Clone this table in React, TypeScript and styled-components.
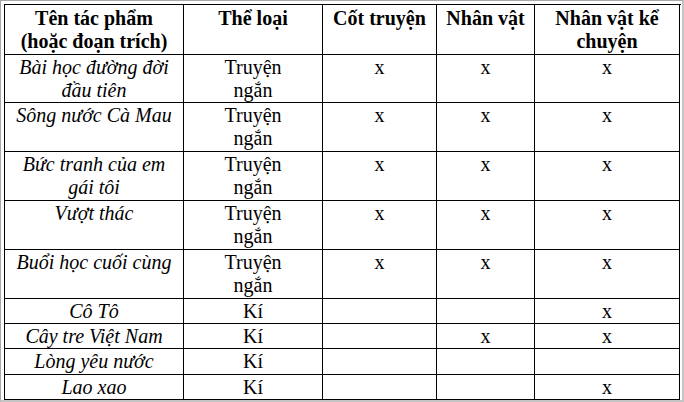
import { Fragment } from "react";
import styled, { createGlobalStyle } from "styled-components";

type Row = {
  title: string[];
  genre: string[];
  plot: boolean;
  character: boolean;
  narrator: boolean;
  height: number;
};

const rows: Row[] = [
  { title: ["Bài học đường đời", "đầu tiên"], genre: ["Truyện", "ngắn"], plot: true, character: true, narrator: true, height: 48 },
  { title: ["Sông nước Cà Mau"], genre: ["Truyện", "ngắn"], plot: true, character: true, narrator: true, height: 49 },
  { title: ["Bức tranh của em", "gái tôi"], genre: ["Truyện", "ngắn"], plot: true, character: true, narrator: true, height: 49 },
  { title: ["Vượt thác"], genre: ["Truyện", "ngắn"], plot: true, character: true, narrator: true, height: 49 },
  { title: ["Buổi học cuối cùng"], genre: ["Truyện", "ngắn"], plot: true, character: true, narrator: true, height: 49 },
  { title: ["Cô Tô"], genre: ["Kí"], plot: false, character: false, narrator: true, height: 25 },
  { title: ["Cây tre Việt Nam"], genre: ["Kí"], plot: false, character: true, narrator: true, height: 25 },
  { title: ["Lòng yêu nước"], genre: ["Kí"], plot: false, character: false, narrator: false, height: 26 },
  { title: ["Lao xao"], genre: ["Kí"], plot: false, character: false, narrator: true, height: 25 },
];

const headers: string[][] = [
  ["Tên tác phẩm", "(hoặc đoạn trích)"],
  ["Thể loại"],
  ["Cốt truyện"],
  ["Nhân vật"],
  ["Nhân vật kể", "chuyện"],
];

const GlobalStyle = createGlobalStyle`
  html, body {
    margin: 0;
    padding: 0;
    background: #ffffff;
  }
`;

const Frame = styled.div`
  box-sizing: border-box;
  width: 684px;
  height: 402px;
  border-top: 1px solid #a8a8a8;
  border-left: 1px solid #a8a8a8;
  border-right: 2px solid #c4c4c4;
  border-bottom: 2px solid #c4c4c4;
  padding: 3px 2px 0 3px;
  background: #ffffff;
`;

const Grid = styled.div`
  display: grid;
  grid-template-columns: 179px 139px 114px 98px 145px;
  border-top: 1px solid #000;
  border-left: 1px solid #000;
  width: 676px;
  font-family: "Liberation Serif", "Times New Roman", serif;
  font-size: 20px;
  line-height: 23px;
  color: #000;
`;

const Cell = styled.div<{ $h: number; $head?: boolean; $italic?: boolean }>`
  box-sizing: border-box;
  height: ${(p) => p.$h}px;
  padding-top: ${(p) => (p.$head ? 2 : 1)}px;
  border-right: 1px solid #000;
  border-bottom: 1px solid #000;
  text-align: center;
  font-weight: ${(p) => (p.$head ? 700 : 400)};
  font-style: ${(p) => (p.$italic ? "italic" : "normal")};
  white-space: nowrap;
`;

const Line = styled.div``;

function Lines({ text }: { text: string[] }) {
  return (
    <>
      {text.map((t) => (
        <Line key={t}>{t}</Line>
      ))}
    </>
  );
}

export default function App() {
  return (
    <>
      <GlobalStyle />
      <Frame>
        <Grid>
          {headers.map((h) => (
            <Cell key={h.join()} $h={50} $head>
              <Lines text={h} />
            </Cell>
          ))}
          {rows.map((r) => (
            <Fragment key={r.title[0]}>
              <Cell $h={r.height} $italic>
                <Lines text={r.title} />
              </Cell>
              <Cell $h={r.height}>
                <Lines text={r.genre} />
              </Cell>
              <Cell $h={r.height}>{r.plot ? "x" : ""}</Cell>
              <Cell $h={r.height}>{r.character ? "x" : ""}</Cell>
              <Cell $h={r.height}>{r.narrator ? "x" : ""}</Cell>
            </Fragment>
          ))}
        </Grid>
      </Frame>
    </>
  );
}
